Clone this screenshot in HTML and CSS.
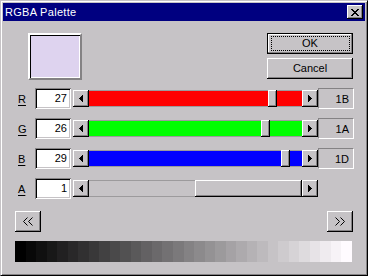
FILE: index.html
```html
<!DOCTYPE html>
<html lang="en">
<head>
    <meta charset="UTF-8">
    <meta name="viewport" content="width=device-width, initial-scale=1.0">
    <title>RGBA Palette</title>
    <link rel="stylesheet" href="styles.css">
</head>
<body>

    <!-- Dialog Window -->
    <div class="window">
        <div class="titlebar">
            <span class="title">RGBA Palette</span>
            <button class="close" aria-label="Close">
                <svg width="8" height="7" viewBox="0 0 8 7"><path d="M0 0h2v1H0zM6 0h2v1H6zM1 1h2v1H1zM5 1h2v1H5zM2 2h4v1H2zM3 3h2v1H3zM2 4h4v1H2zM1 5h2v1H1zM5 5h2v1H5zM0 6h2v1H0zM6 6h2v1H6z"/></svg>
            </button>
        </div>

        <div class="client">
            <!-- Preview + buttons -->
            <div class="top">
                <div class="swatch"></div>
                <div class="actions">
                    <button class="btn default">OK</button>
                    <button class="btn">Cancel</button>
                </div>
            </div>

            <!-- Channels -->
            <div class="channels">
                <div class="channel">
                    <span class="key">R</span>
                    <div class="edit">27</div>
                    <div class="scroll">
                        <div class="arrow"><svg width="4" height="7" viewBox="0 0 4 7"><path d="M3 0h1v7H3zM2 1h1v5H2zM1 2h1v3H1zM0 3h1v1H0z"/></svg></div>
                        <div class="track red"><div class="thumb" style="left: 179px"></div></div>
                        <div class="arrow"><svg width="4" height="7" viewBox="0 0 4 7"><path d="M0 0h1v7H0zM1 1h1v5H1zM2 2h1v3H2zM3 3h1v1H3z"/></svg></div>
                    </div>
                    <div class="hex">1B</div>
                </div>
                <div class="channel">
                    <span class="key">G</span>
                    <div class="edit">26</div>
                    <div class="scroll">
                        <div class="arrow"><svg width="4" height="7" viewBox="0 0 4 7"><path d="M3 0h1v7H3zM2 1h1v5H2zM1 2h1v3H1zM0 3h1v1H0z"/></svg></div>
                        <div class="track green"><div class="thumb" style="left: 172px"></div></div>
                        <div class="arrow"><svg width="4" height="7" viewBox="0 0 4 7"><path d="M0 0h1v7H0zM1 1h1v5H1zM2 2h1v3H2zM3 3h1v1H3z"/></svg></div>
                    </div>
                    <div class="hex">1A</div>
                </div>
                <div class="channel">
                    <span class="key">B</span>
                    <div class="edit">29</div>
                    <div class="scroll">
                        <div class="arrow"><svg width="4" height="7" viewBox="0 0 4 7"><path d="M3 0h1v7H3zM2 1h1v5H2zM1 2h1v3H1zM0 3h1v1H0z"/></svg></div>
                        <div class="track blue"><div class="thumb" style="left: 192px"></div></div>
                        <div class="arrow"><svg width="4" height="7" viewBox="0 0 4 7"><path d="M0 0h1v7H0zM1 1h1v5H1zM2 2h1v3H2zM3 3h1v1H3z"/></svg></div>
                    </div>
                    <div class="hex">1D</div>
                </div>
                <div class="channel">
                    <span class="key">A</span>
                    <div class="edit">1</div>
                    <div class="scroll">
                        <div class="arrow"><svg width="4" height="7" viewBox="0 0 4 7"><path d="M3 0h1v7H3zM2 1h1v5H2zM1 2h1v3H1zM0 3h1v1H0z"/></svg></div>
                        <div class="track"><div class="thumb" style="left: 106px; width: 107px"></div></div>
                        <div class="arrow"><svg width="4" height="7" viewBox="0 0 4 7"><path d="M0 0h1v7H0zM1 1h1v5H1zM2 2h1v3H2zM3 3h1v1H3z"/></svg></div>
                    </div>
                </div>
            </div>

            <!-- Page buttons -->
            <div class="nav">
                <button class="btn page" aria-label="Previous">
                    <svg width="12" height="9" viewBox="0 0 12 9"><path d="M5.5 0.5L1.5 4.5L5.5 8.5M10.5 0.5L6.5 4.5L10.5 8.5" fill="none" stroke="#000"/></svg>
                </button>
                <button class="btn page" aria-label="Next">
                    <svg width="12" height="9" viewBox="0 0 12 9"><path d="M1.5 0.5L5.5 4.5L1.5 8.5M6.5 0.5L10.5 4.5L6.5 8.5" fill="none" stroke="#000"/></svg>
                </button>
            </div>

            <!-- Grey ramp -->
            <div class="ramp">
                <div style="background: #000000"></div>
                <div style="background: #080808"></div>
                <div style="background: #101010"></div>
                <div style="background: #181818"></div>
                <div style="background: #212021"></div>
                <div style="background: #292829"></div>
                <div style="background: #313031"></div>
                <div style="background: #393839"></div>
                <div style="background: #424142"></div>
                <div style="background: #4a494a"></div>
                <div style="background: #525152"></div>
                <div style="background: #5a595a"></div>
                <div style="background: #636163"></div>
                <div style="background: #6b696b"></div>
                <div style="background: #737173"></div>
                <div style="background: #7b797b"></div>
                <div style="background: #848284"></div>
                <div style="background: #8c8a8c"></div>
                <div style="background: #949294"></div>
                <div style="background: #9c9a9c"></div>
                <div style="background: #a5a2a5"></div>
                <div style="background: #adaaad"></div>
                <div style="background: #b5b2b5"></div>
                <div style="background: #bdbabd"></div>
                <div style="background: #c6c3c6"></div>
                <div style="background: #cecbce"></div>
                <div style="background: #d6d3d6"></div>
                <div style="background: #dedbde"></div>
                <div style="background: #e7e3e7"></div>
                <div style="background: #efebef"></div>
                <div style="background: #f7f3f7"></div>
                <div style="background: #fffbff"></div>
            </div>
        </div>
    </div>

</body>
</html>
```

FILE: styles.css
```css
/* Basic Styling */
* {
    box-sizing: border-box;
}

body {
    margin: 0;
    font-family: "Liberation Sans", Arial, sans-serif;
    font-size: 11px;
    color: #000;
    background-color: #c6c3c6;
}

button {
    font: inherit;
    color: inherit;
    padding: 0;
    margin: 0;
    border: none;
    background: #c6c3c6;
}

/* Window Frame */
.window {
    width: 368px;
    height: 276px;
    padding: 2px;
    border: 1px solid;
    border-color: #c6c3c6 #000 #000 #c6c3c6;
    box-shadow: inset 1px 1px #fff, inset -1px -1px #848284;
    background-color: #c6c3c6;
    display: flex;
    flex-direction: column;
}

/* Title Bar */
.titlebar {
    height: 18px;
    display: flex;
    align-items: center;
    justify-content: space-between;
    padding: 0 2px 0 2px;
    background-color: #000080;
}

.title {
    color: #fff;
    letter-spacing: 0.3px;
    line-height: 18px;
}

.close {
    width: 16px;
    height: 14px;
    display: flex;
    align-items: center;
    justify-content: center;
    box-shadow: inset -1px -1px #000, inset 1px 1px #fff, inset -2px -2px #848284;
}

.close svg {
    display: block;
    margin-left: -1px;
}

/* Client Area */
.client {
    padding: 12px 11px 0 12px;
}

.top {
    display: flex;
    justify-content: space-between;
    height: 47px;
}

.swatch {
    width: 54px;
    height: 47px;
    margin-left: 13px;
    background-color: #ded3ef;
    border: 2px solid;
    border-color: #fff #848284 #848284 #fff;
    box-shadow: inset 1px 1px #000, inset -1px -1px #fff;
}

.actions {
    display: flex;
    flex-direction: column;
    gap: 4px;
    margin-right: 1px;
}

/* Buttons */
.btn {
    position: relative;
    width: 86px;
    height: 21px;
    box-shadow: inset -1px -1px #000, inset 1px 1px #fff, inset -2px -2px #848284;
    line-height: 19px;
}

.btn.default {
    border: 1px solid #000;
    box-shadow: inset -1px -1px #848284, inset 1px 1px #fff;
}

.btn.default::after {
    content: '';
    position: absolute;
    top: 2px;
    left: 3px;
    right: 2px;
    bottom: 2px;
    border: 1px dotted #000;
}

/* Channel Rows */
.channels {
    margin-top: 8px;
    display: flex;
    flex-direction: column;
    gap: 9px;
}

.channel {
    display: flex;
    align-items: center;
    height: 21px;
    padding-left: 3px;
}

.key {
    width: 17px;
    text-decoration: underline;
    text-underline-offset: 2px;
}

.edit {
    width: 36px;
    height: 21px;
    padding-right: 4px;
    text-align: right;
    line-height: 20px;
    background-color: #fff;
    box-shadow: inset 1px 1px #848284, inset -1px -1px #fff, inset 2px 2px #000, inset -2px -2px #c6c3c6;
}

/* Scroll Bars */
.scroll {
    display: flex;
    height: 17px;
    margin-left: 2px;
}

.arrow {
    width: 16px;
    display: flex;
    align-items: center;
    justify-content: center;
    box-shadow: inset -1px -1px #000, inset 1px 1px #fff, inset -2px -2px #848284;
}

.arrow svg {
    display: block;
}

.track {
    position: relative;
    width: 213px;
    border-top: 1px solid #9c9a9c;
    border-bottom: 1px solid #9c9a9c;
    background-color: #c6c3c6;
}

.track.red {
    background-color: #ff0000;
}

.track.green {
    background-color: #00ff00;
}

.track.blue {
    background-color: #0000ff;
}

.thumb {
    position: absolute;
    top: -1px;
    bottom: -1px;
    width: 9px;
    background-color: #c6c3c6;
    box-shadow: inset -1px -1px #000, inset 1px 1px #fff, inset -2px -2px #848284;
}

.hex {
    width: 36px;
    height: 21px;
    padding-right: 4px;
    text-align: right;
    line-height: 20px;
    border: 1px solid;
    border-color: #848284 #fff #fff #848284;
}

/* Page Buttons */
.nav {
    display: flex;
    justify-content: space-between;
    margin: 12px 1px 0 0;
}

.btn.page {
    width: 26px;
    display: flex;
    align-items: center;
    justify-content: center;
}

.btn.page svg {
    display: block;
}

/* Grey Ramp */
.ramp {
    display: grid;
    grid-template-columns: repeat(32, 1fr);
    width: 337px;
    height: 21px;
    margin-top: 9px;
}
```
